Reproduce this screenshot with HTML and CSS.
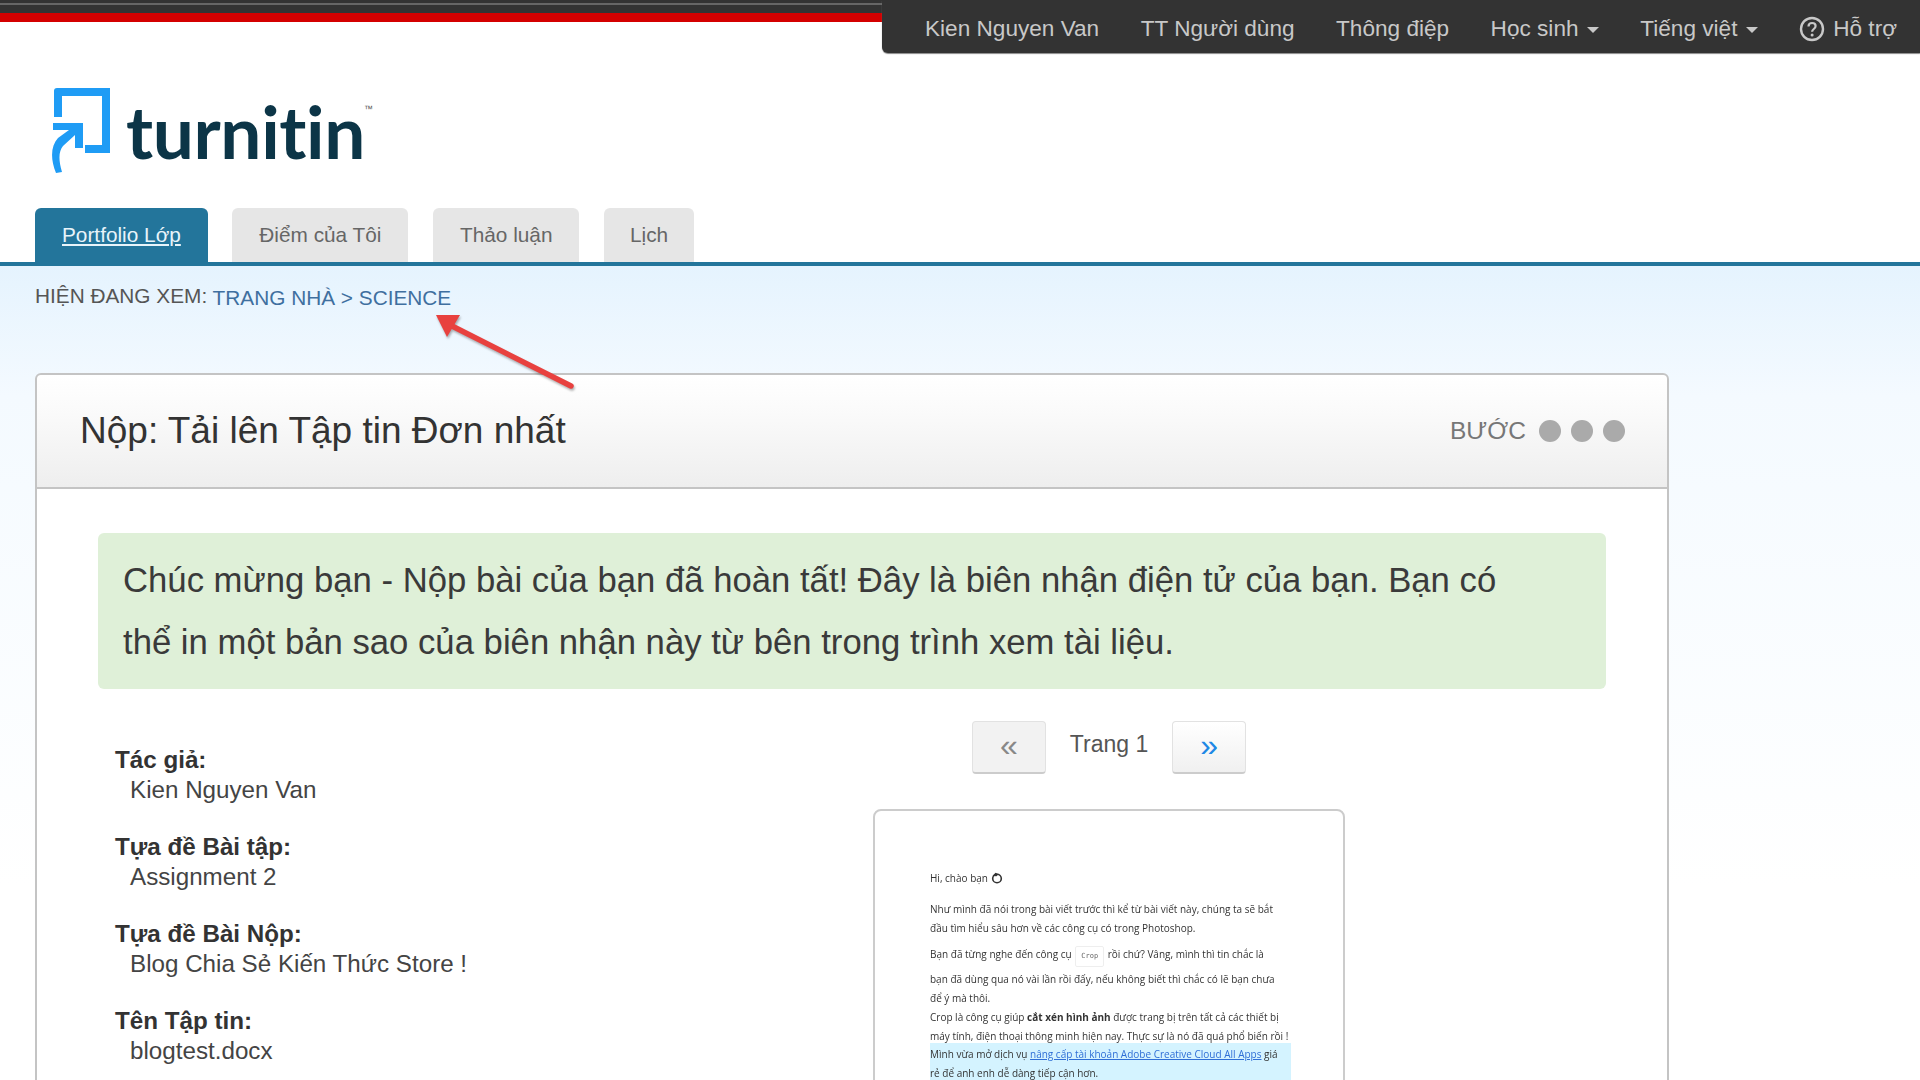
FILE: index.html
```html
<!DOCTYPE html>
<html lang="vi">
<head>
    <meta charset="UTF-8">
    <title>Turnitin - Nộp bài</title>
    <link rel="stylesheet" href="styles.css">
</head>
<body>
    <header class="top-strip">
        <div class="red-bar"></div>
        <nav class="user-nav">
            <a>Kien Nguyen Van</a>
            <a>TT Người dùng</a>
            <a>Thông điệp</a>
            <a>Học sinh <i class="caret"></i></a>
            <a>Tiếng việt <i class="caret"></i></a>
            <a class="help">
                <svg width="26" height="26" viewBox="0 0 26 26"><circle cx="13" cy="13" r="11" fill="none" stroke="#c8c8c8" stroke-width="2.4"/><path d="M9.5 10.5c0-2.2 1.6-3.5 3.6-3.5s3.5 1.2 3.5 3.1c0 2.9-3.5 2.9-3.5 5.6" fill="none" stroke="#c8c8c8" stroke-width="2.2"/><circle cx="13.1" cy="19" r="1.5" fill="#c8c8c8"/></svg>
                Hỗ trợ
            </a>
        </nav>
    </header>

    <div class="logo-row">
        <svg class="logo-mark" width="62" height="90" viewBox="0 0 62 90">
            <path d="M3 31V5a3 3 0 0 1 3-3h53v65H34v-8h17V10H11v21z" fill="#1f9cf5"/>
            <path d="M2 37h30v25h-8V49L12 60c-4 5-5 13-1 26l-6 1C-1 72 0 60 7 52l11-8H2z" fill="#1f9cf5"/>
        </svg>
        <span class="logo-text">turnitin</span>
        <span class="logo-tm">™</span>
    </div>

    <ul class="tabs">
        <li class="tab active"><a>Portfolio Lớp</a></li>
        <li class="tab">Điểm của Tôi</li>
        <li class="tab">Thảo luận</li>
        <li class="tab">Lịch</li>
    </ul>

    <main class="content">
        <div class="breadcrumb">
            <span class="crumb-label">HIỆN ĐANG XEM:</span>
            <span class="crumb-links">TRANG NHÀ &gt; SCIENCE</span>
        </div>

        <!-- red annotation arrow -->
        <svg class="arrow" width="150" height="90" viewBox="0 0 150 90">
            <path d="M139 72L20 12" stroke="#e8413f" stroke-width="5.5" stroke-linecap="round" fill="none"/>
            <path d="M4 1L28 1L15 23z" fill="#e8413f"/>
        </svg>

        <section class="card">
            <div class="card-head">
                <h1>Nộp: Tải lên Tập tin Đơn nhất</h1>
                <div class="steps">
                    <span class="steps-label">BƯỚC</span>
                    <i class="dot"></i><i class="dot"></i><i class="dot"></i>
                </div>
            </div>
            <div class="card-body">
                <div class="notice">Chúc mừng bạn - Nộp bài của bạn đã hoàn tất! Đây là biên nhận điện tử của bạn. Bạn có thể in một bản sao của biên nhận này từ bên trong trình xem tài liệu.</div>
                <div class="receipt">
                    <dl class="details">
                        <div class="detail"><dt>Tác giả:</dt><dd>Kien Nguyen Van</dd></div>
                        <div class="detail"><dt>Tựa đề Bài tập:</dt><dd>Assignment 2</dd></div>
                        <div class="detail"><dt>Tựa đề Bài Nộp:</dt><dd>Blog Chia Sẻ Kiến Thức Store !</dd></div>
                        <div class="detail"><dt>Tên Tập tin:</dt><dd>blogtest.docx</dd></div>
                    </dl>
                    <div class="viewer">
                        <div class="pager">
                            <button class="page-btn prev">«</button>
                            <span class="page-label">Trang 1</span>
                            <button class="page-btn next">»</button>
                        </div>
                        <div class="doc">
                            <p class="doc-line hi">Hi, chào bạn
                                <svg width="12" height="12" viewBox="0 0 12 12"><circle cx="6" cy="6.5" r="4.3" fill="none" stroke="#333" stroke-width="1.6"/><path d="M1.5 4L4.5 .8l3 1.5-2 2z" fill="#333"/></svg>
                            </p>
                            <p class="doc-line">Như mình đã nói trong bài viết trước thì kể từ bài viết này, chúng ta sẽ bắt</p>
                            <p class="doc-line">đầu tìm hiểu sâu hơn về các công cụ có trong Photoshop.</p>
                            <p class="doc-line gap-b">Bạn đã từng nghe đến công cụ <code class="crop">Crop</code> rồi chứ? Vâng, mình thì tin chắc là</p>
                            <p class="doc-line gap-c">bạn đã dùng qua nó vài lần rồi đấy, nếu không biết thì chắc có lẽ bạn chưa</p>
                            <p class="doc-line">để ý mà thôi.</p>
                            <p class="doc-line">Crop là công cụ giúp <b>cắt xén hình ảnh</b> được trang bị trên tất cả các thiết bị</p>
                            <p class="doc-line">máy tính, điện thoại thông minh hiện nay. Thực sự là nó đã quá phổ biến rồi !</p>
                            <div class="promo">
                                <p class="doc-line">Mình vừa mở dịch vụ <a class="doc-link">nâng cấp tài khoản Adobe Creative Cloud All Apps</a> giá</p>
                                <p class="doc-line">rẻ để anh enh dễ dàng tiếp cận hơn.</p>
                            </div>
                        </div>
                    </div>
                </div>
            </div>
        </section>
    </main>
</body>
</html>
```

FILE: styles.css
```css
* {
    box-sizing: border-box;
}

html, body {
    height: 1080px;
    overflow: hidden;
}

body {
    margin: 0;
    background-color: white;
    font-family: 'Liberation Sans', Arial, sans-serif;
    color: #333;
}

/* top bars */
.top-strip {
    height: 53px;
    background: linear-gradient(#333 0, #333 3px, #666 3px, #666 5px, #333 5px, #333 13px, transparent 13px);
    display: flex;
}

.red-bar {
    width: 882px;
    height: 9px;
    margin-top: 13px;
    background-color: #d40000;
}

.user-nav {
    flex: 1;
    background-color: #333;
    border-bottom-left-radius: 6px;
    box-shadow: 0 1px 1px #888;
    display: flex;
    align-items: center;
    gap: 41.5px;
    padding: 4px 0 0 43px;
    font-size: 22.6px;
    color: #c8c8c8;
    white-space: nowrap;
}

.caret {
    display: inline-block;
    border-left: 6px solid transparent;
    border-right: 6px solid transparent;
    border-top: 6px solid #c8c8c8;
    vertical-align: middle;
    margin-left: 2px;
}

.help {
    display: flex;
    align-items: center;
    gap: 8px;
}

/* logo */
.logo-row {
    height: 155px;
    display: flex;
    align-items: flex-start;
    padding: 33px 0 0 51px;
}

.logo-text {
    font-family: Lato, sans-serif;
    font-weight: 700;
    font-size: 73px;
    line-height: 92px;
    letter-spacing: -0.4px;
    font-variant-ligatures: none;
    color: #0c3547;
    margin: -1px 0 0 13px;
}

.logo-tm {
    font-size: 9px;
    color: #555;
    margin: 18px 0 0 -1px;
}

/* tabs */
.tabs {
    list-style: none;
    margin: 0;
    padding: 0 0 0 35px;
    height: 58px;
    display: flex;
    gap: 24.5px;
    border-bottom: 4px solid #23759b;
}

.tab {
    height: 54px;
    padding: 0 27px;
    display: flex;
    align-items: center;
    background-color: #e6e6e6;
    border-radius: 6px 6px 0 0;
    font-size: 20.8px;
    color: #666;
}

.tab:last-child {
    padding: 0 26px;
}

.tab.active {
    background-color: #23759b;
    color: #e8f4fa;
    text-decoration: underline;
}

/* page body */
.content {
    position: relative;
    height: 814px;
    padding: 0 0 0 35px;
    background: linear-gradient(#e5f3fe 0, #f4faff 130px, #fff 620px);
}

.breadcrumb {
    height: 107px;
    padding-top: 18px;
    font-size: 20.8px;
}

.crumb-label {
    color: #555;
}

.crumb-links {
    color: #3f6f9f;
    position: relative;
    top: 2px;
}

.arrow {
    position: absolute;
    left: 432px;
    top: 48px;
    z-index: 2;
    filter: drop-shadow(1px 2px 1px rgba(0, 0, 0, 0.3));
}

.card {
    width: 1634px;
    height: 800px;
    background-color: white;
    border: 2px solid #c4c4c4;
    border-radius: 6px 6px 0 0;
}

.card-head {
    height: 114px;
    padding: 0 42px 0 43px;
    display: flex;
    align-items: center;
    justify-content: space-between;
    background: linear-gradient(#fff, #fafafa 35%, #eee);
    border-bottom: 2px solid #c4c4c4;
    border-radius: 6px 6px 0 0;
}

h1 {
    margin: 0;
    font-size: 37px;
    font-weight: normal;
    color: #333;
}

.steps {
    display: flex;
    align-items: center;
    gap: 10px;
    font-size: 24.5px;
    color: #777;
}

.steps-label {
    margin-right: 3px;
}

.dot {
    width: 22px;
    height: 22px;
    border-radius: 50%;
    background-color: #aaa;
}

.card-body {
    padding: 44px 61px 0;
}

.notice {
    width: 1508px;
    height: 156px;
    padding: 16px 70px 16px 25px;
    background-color: #dff0d8;
    border-radius: 6px;
    font-size: 34.7px;
    line-height: 62px;
    color: #3a3a3a;
}

.receipt {
    display: flex;
}

.details {
    width: 775px;
    margin: 55px 0 0;
    padding-left: 17px;
    font-size: 24.2px;
    line-height: 31px;
}

.detail {
    margin-bottom: 26px;
}

dt {
    font-weight: bold;
    color: #333;
}

dd {
    margin: -1px 0 0 15px;
    color: #444;
}

.viewer {
    width: 472px;
}

.pager {
    height: 120px;
    padding-top: 32px;
    display: flex;
    justify-content: center;
    gap: 24px;
}

.page-btn {
    width: 74px;
    height: 53px;
    border: 1px solid #e2e2e2;
    border-bottom: 2px solid #ccc;
    border-radius: 4px;
    font-size: 32px;
    font-family: 'Liberation Sans', Arial, sans-serif;
    padding: 0 0 4px;
}

.prev {
    background-color: #f2f2f2;
    color: #888;
}

.next {
    background: linear-gradient(#fff, #f0f0f0);
    color: #1e88e5;
}

.page-label {
    font-size: 23px;
    line-height: 46px;
    color: #555;
}

.doc {
    width: 472px;
    height: 400px;
    padding: 58px 0 0 55px;
    border: 2px solid #ccc;
    border-radius: 8px 8px 0 0;
    filter: blur(0.5px);
}

.doc-line {
    margin: 0;
    font-family: 'Open Sans', sans-serif;
    font-size: 10px;
    line-height: 19px;
    color: #333;
    white-space: nowrap;
}

.hi {
    margin-bottom: 12px;
}

.hi svg {
    vertical-align: -2px;
}

.gap-b {
    margin-top: 7px;
}

.gap-c {
    margin-top: 3px;
}

.crop {
    display: inline-block;
    padding: 0 5px;
    margin: 0 1px;
    border: 1px solid #eee;
    border-radius: 2px;
    font-size: 7px;
    color: #666;
}

.promo {
    width: 361px;
    height: 60px;
    margin-top: -3px;
    padding-top: 2px;
    background-color: #d4f3ff;
}

.doc-link {
    color: #2f6fd6;
    text-decoration: underline;
}
```
